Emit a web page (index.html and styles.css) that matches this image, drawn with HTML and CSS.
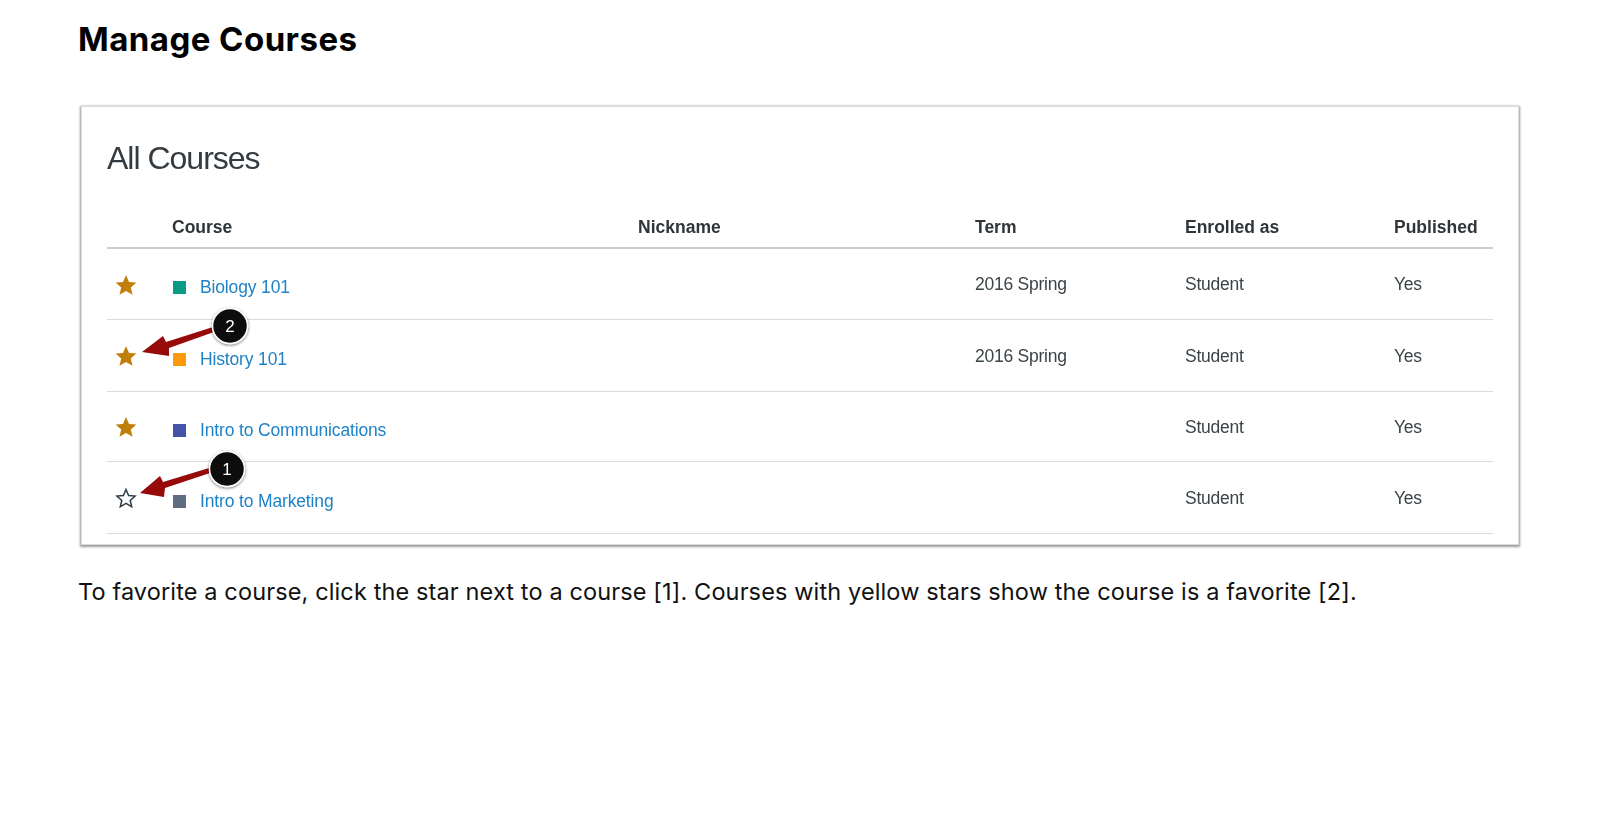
FILE: index.html
```html
<!DOCTYPE html>
<html lang="en">
<head>
<meta charset="utf-8">
<title>Manage Courses</title>
<link rel="stylesheet" href="styles.css">
</head>
<body>
<main class="page">
  <h2 class="title">Manage Courses</h2>
  <div class="shot">
    <h1 class="shot-title">All Courses</h1>
    <table class="courses">
      <colgroup>
        <col class="c-star"><col class="c-course"><col class="c-nick"><col class="c-term"><col class="c-enrolled"><col class="c-pub">
      </colgroup>
      <thead>
        <tr><th></th><th>Course</th><th>Nickname</th><th>Term</th><th>Enrolled as</th><th>Published</th></tr>
      </thead>
      <tbody>
        <tr class="r1">
          <td class="star-cell"><svg class="star" viewBox="0 0 24 24"><path class="on" d="M12 2l3 6.9 7.4.7-5.6 4.9 1.7 7.3-6.500-3.900-6.500 3.900 1.700-7.300-5.600-4.900 7.400-.7z"/></svg></td>
          <td class="name"><span class="swatch teal"></span><a href="#">Biology 101</a></td>
          <td></td><td>2016 Spring</td><td>Student</td><td>Yes</td>
        </tr>
        <tr class="r2">
          <td class="star-cell"><svg class="star" viewBox="0 0 24 24"><path class="on" d="M12 2l3 6.9 7.4.7-5.6 4.9 1.7 7.3-6.500-3.900-6.500 3.900 1.700-7.300-5.600-4.900 7.400-.7z"/></svg></td>
          <td class="name"><span class="swatch orange"></span><a href="#">History 101</a></td>
          <td></td><td>2016 Spring</td><td>Student</td><td>Yes</td>
        </tr>
        <tr class="r3">
          <td class="star-cell"><svg class="star" viewBox="0 0 24 24"><path class="on" d="M12 2l3 6.9 7.4.7-5.6 4.9 1.7 7.3-6.500-3.900-6.500 3.900 1.700-7.300-5.600-4.900 7.400-.7z"/></svg></td>
          <td class="name"><span class="swatch indigo"></span><a href="#">Intro to Communications</a></td>
          <td></td><td></td><td>Student</td><td>Yes</td>
        </tr>
        <tr class="r4">
          <td class="star-cell"><svg class="star" viewBox="0 0 24 24"><path class="off" d="M12 3.500l2.600 6 6.500.6-4.900 4.300 1.500 6.400-5.700-3.400-5.700 3.400 1.500-6.400-4.900-4.300 6.500-.6z"/></svg></td>
          <td class="name"><span class="swatch slate"></span><a href="#">Intro to Marketing</a></td>
          <td></td><td></td><td>Student</td><td>Yes</td>
        </tr>
      </tbody>
    </table>
    <svg class="callouts" viewBox="0 0 1438 439">
      <defs>
        <filter id="ds" x="-50%" y="-50%" width="200%" height="200%"><feDropShadow dx="0" dy="1" stdDeviation="1.500" flood-color="#000" flood-opacity=".55"/></filter>
      </defs>
      <path class="arrow" d="M60 245L81 229L84 235L131 220L132 225L87 241L87 249Z"/>
      <circle class="badge" cx="148" cy="219" r="17.500"/>
      <text class="badge-num" x="148" y="225">2</text>
      <path class="arrow" d="M58 386L78 369L81 375L127 361L128 366L83 381L82 390Z"/>
      <circle class="badge" cx="145" cy="362" r="17.500"/>
      <text class="badge-num" x="145" y="368">1</text>
    </svg>
  </div>
  <p class="note">To favorite a course, click the star next to a course [1]. Courses with yellow stars show the course is a favorite [2].</p>
</main>
</body>
</html>
```
FILE: styles.css
```css
html, body { margin: 0; background: #fff; }
.page { padding: 0 78px; }
.title {
  margin: 0;
  padding-top: 18px;
  font: 700 33px/42px "Inter", sans-serif;
  letter-spacing: .45px;
  color: #000;
}
.shot {
  position: relative;
  box-sizing: border-box;
  width: 1438px;
  height: 439px;
  margin: 46px 0 0 3px;
  padding: 0 25px;
  background: #fff;
  border: 1px solid #dcdcdc;
  box-shadow: 0 1px 2px 1px rgba(0,0,0,.4);
  filter: blur(.35px);
  font-family: "Liberation Sans", sans-serif;
}
.shot-title {
  margin: 0;
  padding-top: 32px;
  font: 400 32px/38px "Liberation Sans", sans-serif;
  letter-spacing: -1px;
  color: #333b40;
}
.courses {
  width: 1386px;
  margin-top: 34px;
  border-collapse: collapse;
  table-layout: fixed;
  font-size: 17.500px;
  color: #3a4347;
}
.c-star { width: 65px; }
.c-course { width: 466px; }
.c-nick { width: 337px; }
.c-term { width: 210px; }
.c-enrolled { width: 209px; }
.c-pub { width: 99px; }
.courses th {
  height: 37px;
  padding: 0 0 3px;
  text-align: left;
  font-weight: 700;
  color: #2f3538;
  border-bottom: 2px solid #c7cdd1;
  box-sizing: border-box;
}
.courses td {
  box-sizing: border-box;
  padding: 2px 0 0;
  border-bottom: 1px solid #d8dcdf;
  vertical-align: middle;
  letter-spacing: -.25px;
}
.r1 td { height: 71px; }
.r2 td { height: 72px; }
.r3 td { height: 70px; }
.r4 td { height: 72px; }
.courses .name { padding-top: 8px; letter-spacing: -.15px; }
.courses .star-cell { padding: 2px 0 0 7px; }
.star { display: block; width: 24px; height: 24px; }
.on { fill: #c07f0a; }
.off { fill: #fff; stroke: #2d3b45; stroke-width: 1.500; }
.name { white-space: nowrap; }
.name a { color: #1f82c7; text-decoration: none; }
.swatch {
  display: inline-block;
  width: 13px;
  height: 13px;
  margin: 0 14.500px 0 .5px;
  vertical-align: -1px;
}
.teal { background: #0b9a83; }
.orange { background: #fd9a0c; }
.indigo { background: #4553a8; }
.slate { background: #5f6c82; }
.callouts {
  position: absolute;
  left: 0;
  top: 0;
  width: 1438px;
  height: 439px;
  overflow: visible;
}
.arrow { fill: #960a0a; }
.badge { fill: #0c0c0c; stroke: #fff; stroke-width: 1.500; filter: url(#ds); }
.badge-num {
  fill: #fff;
  font: 400 17px "Liberation Sans", sans-serif;
  text-anchor: middle;
}
.note {
  margin: 31px 0 0;
  font: 400 23.500px/32px "Inter", sans-serif;
  letter-spacing: .13px;
  color: #111;
}
```
